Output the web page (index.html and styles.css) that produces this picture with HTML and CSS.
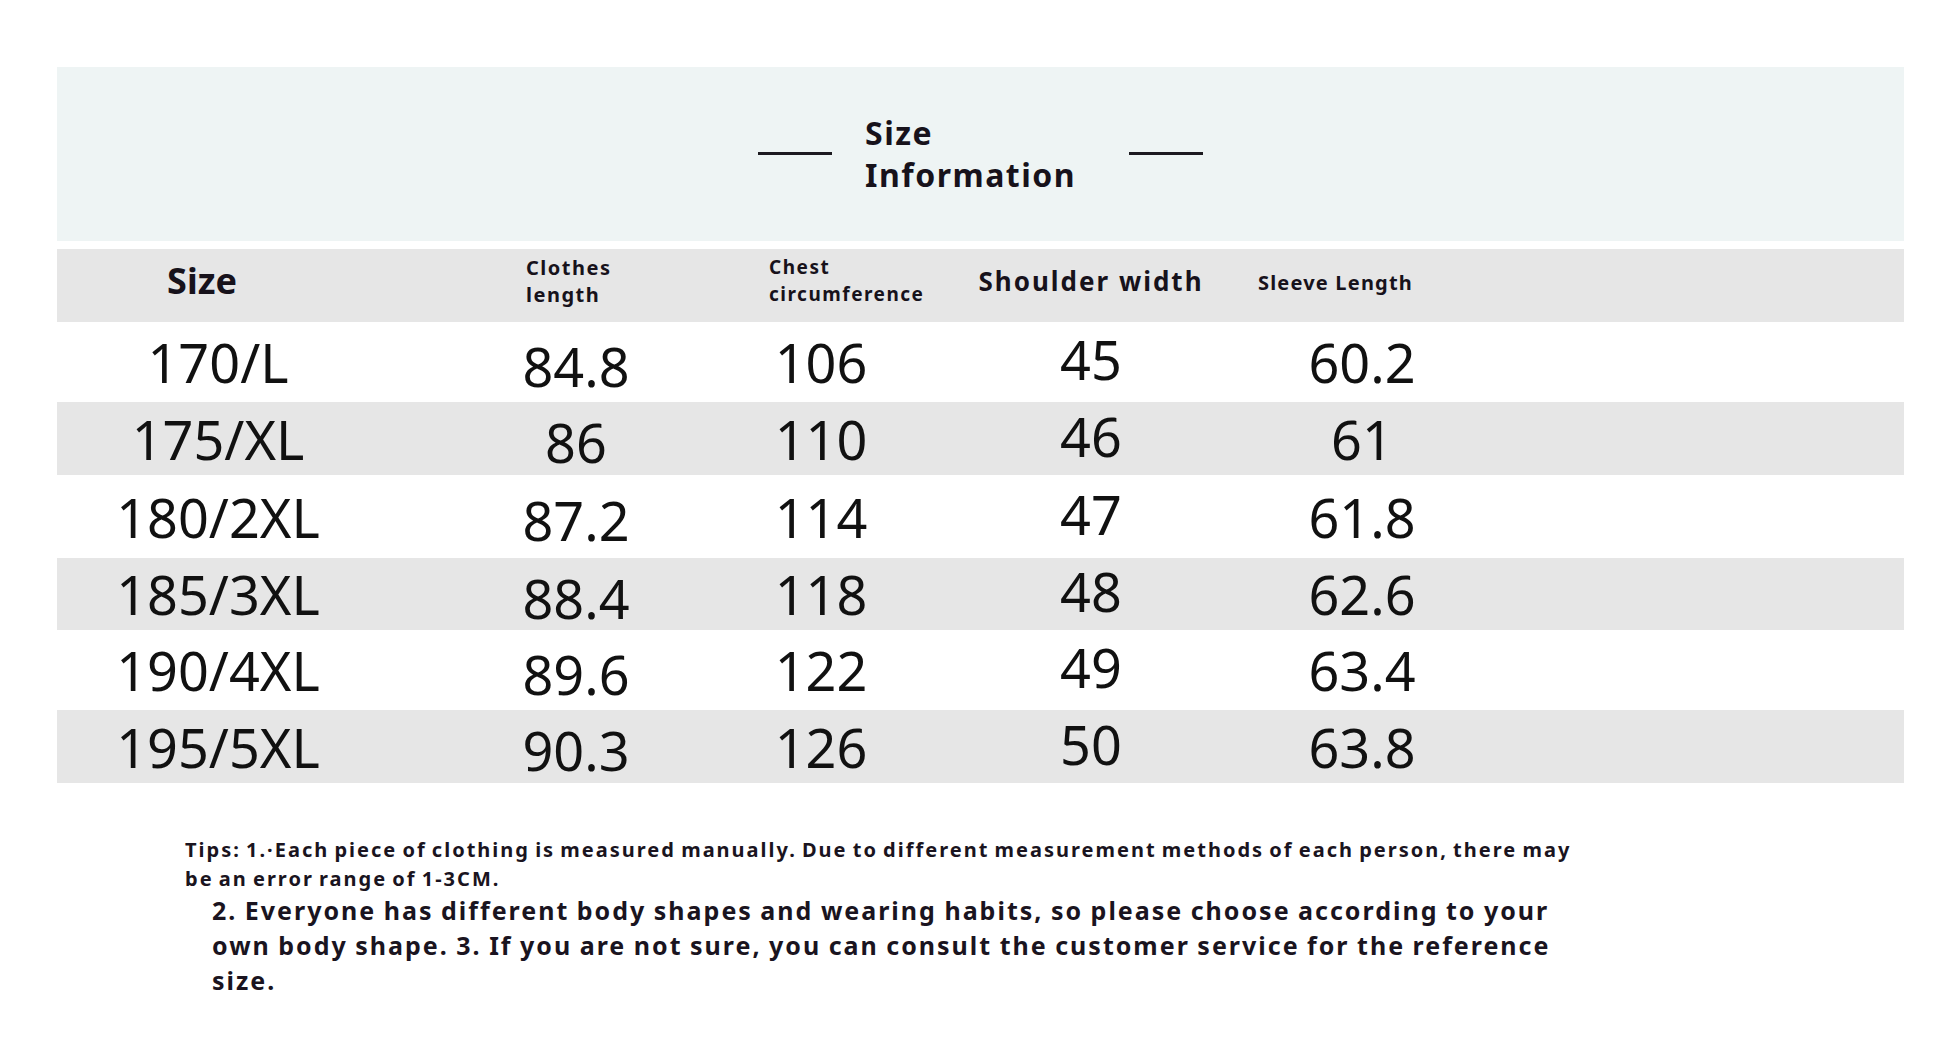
FILE: index.html
```html
<!DOCTYPE html>
<html lang="en">
<head>
<meta charset="utf-8">
<title>Size Information</title>
<link rel="stylesheet" href="styles.css">
</head>
<body>
<div class="sheet">
  <div class="banner">
    <span class="dash"></span>
    <div class="title">Size<br>Information</div>
    <span class="dash"></span>
  </div>

  <div class="table">
    <div class="row head">
      <div class="cell h-size">Size</div>
      <div class="cell h-left h-clothes">Clothes<br>length</div>
      <div class="cell h-left h-chest">Chest<br>circumference</div>
      <div class="cell h-shoulder">Shoulder width</div>
      <div class="cell h-sleeve">Sleeve Length</div>
      <div class="cell"></div>
    </div>
    <div class="row">
      <div class="cell d">170/L</div><div class="cell d low">84.8</div><div class="cell d">106</div><div class="cell d high">45</div><div class="cell d">60.2</div><div class="cell"></div>
    </div>
    <div class="row grey">
      <div class="cell d">175/XL</div><div class="cell d low">86</div><div class="cell d">110</div><div class="cell d high">46</div><div class="cell d">61</div><div class="cell"></div>
    </div>
    <div class="row">
      <div class="cell d">180/2XL</div><div class="cell d low">87.2</div><div class="cell d">114</div><div class="cell d high">47</div><div class="cell d">61.8</div><div class="cell"></div>
    </div>
    <div class="row grey">
      <div class="cell d">185/3XL</div><div class="cell d low">88.4</div><div class="cell d">118</div><div class="cell d high">48</div><div class="cell d">62.6</div><div class="cell"></div>
    </div>
    <div class="row">
      <div class="cell d">190/4XL</div><div class="cell d low">89.6</div><div class="cell d">122</div><div class="cell d high">49</div><div class="cell d">63.4</div><div class="cell"></div>
    </div>
    <div class="row grey">
      <div class="cell d">195/5XL</div><div class="cell d low">90.3</div><div class="cell d">126</div><div class="cell d high">50</div><div class="cell d">63.8</div><div class="cell"></div>
    </div>
  </div>

  <div class="tips">
    <p class="tip-small">Tips: 1.·Each piece of clothing is measured manually. Due to different measurement methods of each person, there may be an error range of 1-3CM.</p>
    <p class="tip-large">2. Everyone has different body shapes and wearing habits, so please choose according to your own body shape. 3. If you are not sure, you can consult the customer service for the reference size.</p>
  </div>
</div>
</body>
</html>
```

FILE: styles.css
```css
* { box-sizing: border-box; }

html, body {
  margin: 0;
  padding: 0;
  background: #ffffff;
}

body {
  font-family: "Noto Sans", "Open Sans", sans-serif;
  color: #17121b;
}

.sheet {
  width: 1904px;
  padding: 67px 0 0 57px;
}

.banner {
  height: 174px;
  background: #eef4f4;
  display: flex;
  align-items: center;
  justify-content: center;
  gap: 33px;
}

.dash {
  width: 74px;
  height: 3px;
  background: #1c1a20;
  margin-top: -1px;
}

.title {
  width: 231px;
  font-size: 32px;
  font-weight: 700;
  line-height: 42px;
  letter-spacing: 1.5px;
}

.table {
  margin-top: 8px;
  display: grid;
  grid-template-rows: 73px 80px 73px 83px 72px 80px 73px;
}

.row {
  display: grid;
  grid-template-columns: 322px 394px 96px 444px 98px 1fr;
  align-items: center;
}

.head, .grey {
  background: #e6e6e6;
}

.cell {
  display: flex;
  justify-content: center;
  white-space: nowrap;
}

.head .cell {
  padding-bottom: 10px;
}

.head .h-sleeve {
  padding-bottom: 6px;
}

.h-size {
  font-size: 36px;
  font-weight: 700;
  padding-right: 32px;
}

.h-left {
  justify-content: flex-start;
  font-weight: 700;
  line-height: 27px;
  letter-spacing: 1.5px;
}

.h-clothes {
  font-size: 20px;
  padding-left: 147px;
}

.h-chest {
  font-size: 19px;
  margin-left: -4px;
}

.h-shoulder {
  font-size: 26px;
  font-weight: 700;
  letter-spacing: 2px;
}

.h-sleeve {
  justify-content: flex-end;
  font-size: 20px;
  font-weight: 700;
  letter-spacing: 1.2px;
  margin-right: -2px;
}

.d {
  font-size: 54px;
  font-weight: 400;
  line-height: 60px;
  color: #111111;
  padding-top: 0;
}

.d.low {
  padding-top: 7px;
}

.d.high {
  padding-top: 0;
  padding-bottom: 6px;
}

.tips {
  margin-top: 52px;
  font-weight: 700;
  color: #1a1420;
}

.tips p {
  margin: 0;
}

.tip-small {
  width: 1538px;
  padding-left: 128px;
  font-size: 20px;
  line-height: 29px;
  letter-spacing: 2px;
  word-spacing: -2px;
}

.tip-large {
  width: 1525px;
  padding-left: 155px;
  font-size: 25px;
  line-height: 35px;
  letter-spacing: 2px;
  word-spacing: -1px;
}
```
